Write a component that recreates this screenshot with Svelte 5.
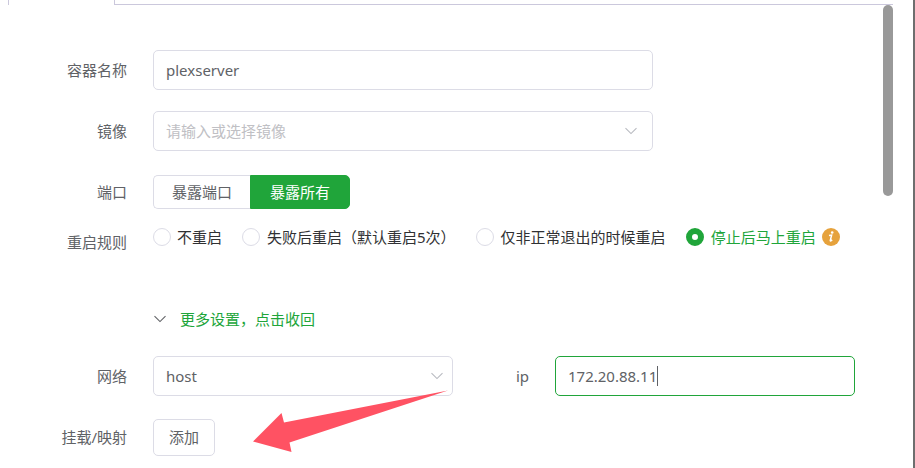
<script lang="ts">
  let name = $state('plexserver');
  let image = $state('');
  let port = $state('all');
  let restart = $state('always');
  let network = $state('host');
  let ip = $state('172.20.88.11');

  const ports = [
    { value: 'some', label: '暴露端口' },
    { value: 'all', label: '暴露所有' }
  ];

  const restartRules = [
    { value: 'no', label: '不重启' },
    { value: 'on-failure', label: '失败后重启（默认重启5次）' },
    { value: 'unless-stopped', label: '仅非正常退出的时候重启' },
    { value: 'always', label: '停止后马上重启' }
  ];
</script>

{#snippet chevron()}
  <svg class="chevron" viewBox="0 0 14 8" width="14" height="8" aria-hidden="true">
    <path d="M1.5 1.2 L7 6.6 L12.5 1.2" fill="none" stroke="currentColor" stroke-width="1.1" />
  </svg>
{/snippet}

<div class="dialog">
  <div class="tabs">
    <div class="tab"></div>
    <div class="tabs-line"></div>
  </div>

  <div class="body">
    <form class="form">
      <div class="row">
        <label class="label" for="name">容器名称</label>
        <input id="name" class="field wide" type="text" bind:value={name} />
      </div>

      <div class="row">
        <label class="label" for="image">镜像</label>
        <div class="select wide">
          <select id="image" class="field" class:empty={!image} bind:value={image}>
            <option value="">请输入或选择镜像</option>
          </select>
          {@render chevron()}
        </div>
      </div>

      <div class="row">
        <span class="label">端口</span>
        <div class="segmented">
          {#each ports as item (item.value)}
            <button type="button" class:active={port === item.value} onclick={() => (port = item.value)}>
              {item.label}
            </button>
          {/each}
        </div>
      </div>

      <div class="row rules">
        <span class="label">重启规则</span>
        <div class="radios">
          {#each restartRules as rule (rule.value)}
            <label class="radio" class:checked={restart === rule.value}>
              <input type="radio" name="restart" value={rule.value} bind:group={restart} />
              <span>{rule.label}</span>
            </label>
          {/each}
          <svg class="info" viewBox="0 0 18 18" width="18" height="18" aria-hidden="true">
            <circle cx="9" cy="9" r="9" fill="#e6a23c" />
            <circle cx="10.2" cy="4.5" r="1.3" fill="#fff" />
            <path
              d="M7 7.6 L9.6 7.1 L8.3 12.4 C8.1 13.4 8.8 13.1 10.2 11.9"
              fill="none"
              stroke="#fff"
              stroke-width="1.5"
            />
          </svg>
        </div>
      </div>

      <button type="button" class="more">
        {@render chevron()}
        <span>更多设置，点击收回</span>
      </button>

      <div class="row">
        <label class="label" for="network">网络</label>
        <div class="select half">
          <select id="network" class="field" bind:value={network}>
            <option value="host">host</option>
          </select>
          {@render chevron()}
        </div>
        <label class="label short" for="ip">ip</label>
        <div class="field half focused">
          <input id="ip" type="text" bind:value={ip} />
          <span class="caret"></span>
        </div>
      </div>

      <div class="row mount">
        <span class="label">挂载/映射</span>
        <button type="button" class="add">添加</button>
        <svg class="arrow" viewBox="0 0 196 63" width="196" height="63" aria-hidden="true">
          <path d="M195 0.5 L31 32.5 L28.5 23 L0 51.5 L38.5 62 L36.5 52.5 Z" fill="#ff5263" />
        </svg>
      </div>
    </form>

    <div class="scrollbar"></div>
  </div>
</div>

<style>
  :global(body) {
    margin: 0;
    background: #fff;
  }
  .dialog {
    box-sizing: border-box;
    min-height: 100vh;
    padding-right: 20px;
    border-right: 2px solid #6e6e6e;
    color: #606266;
    font-family: 'Noto Sans', 'Noto Sans CJK SC', sans-serif;
    font-size: 15px;
    line-height: 20px;
  }
  .tabs {
    display: flex;
    height: 5px;
    padding-left: 8px;
  }
  .tab {
    width: 105px;
    border: solid #cbc8dc;
    border-width: 0 1px;
  }
  .tabs-line {
    flex: 1;
    border-bottom: 1px solid #cbc8dc;
  }
  .body {
    display: flex;
    align-items: flex-start;
  }
  .form {
    flex: 1;
    min-width: 0;
    display: flex;
    flex-direction: column;
    gap: 21px;
    padding-top: 45px;
  }
  .scrollbar {
    width: 10px;
    height: 191px;
    border-radius: 5px;
    background: #999;
  }
  .row {
    display: flex;
    align-items: center;
    min-height: 40px;
  }
  .label {
    flex: none;
    width: 127px;
    margin-right: 26px;
    text-align: right;
  }
  .label.short {
    width: 76px;
  }
  .field {
    box-sizing: border-box;
    width: 100%;
    height: 40px;
    padding: 0 12px;
    border: 1px solid #dcdce6;
    border-radius: 5px;
    background: #fff;
    color: #606266;
    font: inherit;
    outline: none;
    appearance: none;
  }
  .wide {
    width: 500px;
  }
  .half {
    width: 300px;
  }
  .select {
    position: relative;
  }
  .select .chevron {
    position: absolute;
    top: 16px;
    right: 15px;
    color: #b8bac0;
    pointer-events: none;
  }
  .select.half .chevron {
    right: 9px;
  }
  .select .empty {
    color: #c0c0c4;
  }
  .focused {
    display: flex;
    align-items: center;
    border-color: #20a53a;
  }
  .focused input {
    field-sizing: content;
    padding: 0;
    border: 0;
    background: none;
    color: inherit;
    font: inherit;
    outline: none;
    caret-color: transparent;
  }
  .caret {
    width: 1px;
    height: 20px;
    background: #606266;
  }
  .segmented {
    display: flex;
  }
  .segmented button {
    height: 34px;
    padding: 0 19px;
    border: 1px solid #dcdce6;
    background: #fff;
    color: #606266;
    font: inherit;
  }
  .segmented button:first-child {
    padding: 0 18px;
    border-right: 0;
    border-radius: 5px 0 0 5px;
  }
  .segmented button:last-child {
    border-radius: 0 5px 5px 0;
  }
  .segmented .active {
    border-color: #20a53a;
    background: #20a53a;
    color: #fff;
  }
  .rules {
    align-items: flex-start;
    margin-top: -11px;
    line-height: 40px;
  }
  .radios {
    display: flex;
    align-items: center;
    height: 30px;
    line-height: 30px;
    white-space: nowrap;
  }
  .radio {
    display: flex;
    align-items: center;
    gap: 6px;
    margin-right: 20px;
    color: #303133;
  }
  .radio input {
    box-sizing: border-box;
    width: 18px;
    height: 18px;
    margin: 0;
    border: 1px solid #dcdce6;
    border-radius: 50%;
    background: #fff;
    appearance: none;
  }
  .radio input:checked {
    border: 6px solid #20a53a;
  }
  .radio.checked {
    margin-right: 6px;
    color: #20a53a;
  }
  .radio:nth-child(n + 2) {
    gap: 7px;
  }
  .more {
    display: flex;
    align-items: center;
    gap: 13px;
    height: 30px;
    margin: 21px 0 1px 153px;
    padding: 0;
    border: 0;
    background: none;
    color: #20a53a;
    font: inherit;
  }
  .more .chevron {
    color: #606266;
  }
  .mount {
    position: relative;
  }
  .add {
    height: 37px;
    padding: 0 15px;
    border: 1px solid #dcdce6;
    border-radius: 5px;
    background: #fff;
    color: #606266;
    font: inherit;
  }
  .arrow {
    position: absolute;
    top: -27px;
    left: 253px;
    pointer-events: none;
  }
</style>
